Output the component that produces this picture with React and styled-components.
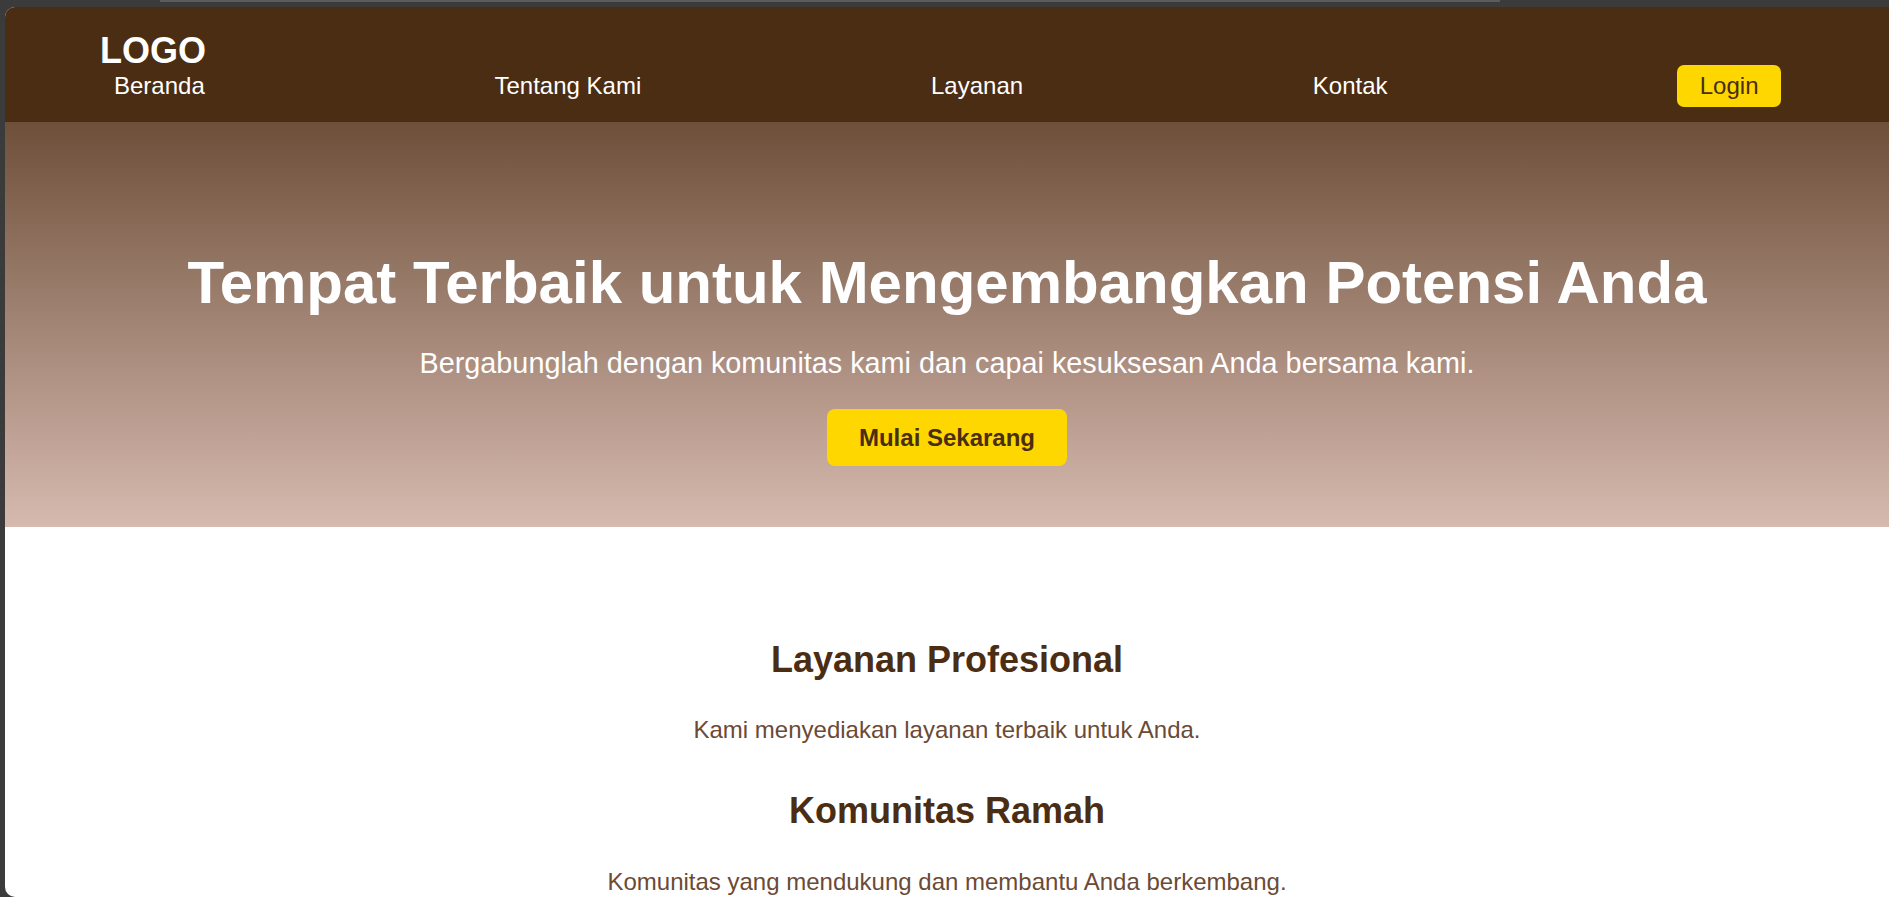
import React from "react";
import styled, { createGlobalStyle } from "styled-components";

const GlobalStyle = createGlobalStyle`
  html, body {
    margin: 0;
    padding: 0;
    background: #3b3b3b;
    overflow: hidden;
  }
  body {
    font-family: "Liberation Sans", Arial, sans-serif;
  }
  * { box-sizing: border-box; }
`;

const Frame = styled.div`
  width: 1889px;
  height: 897px;
  display: flex;
  flex-direction: column;
  background: #3b3b3b;
`;

const TopStrip = styled.div`
  height: 7px;
  flex: none;
  display: flex;
  align-items: flex-start;
`;

const TabHighlight = styled.div`
  margin-left: 160px;
  width: 1340px;
  height: 2px;
  background: #5c5c5c;
`;

const Window = styled.div`
  margin-left: 5px;
  width: 1884px;
  height: 890px;
  background: #ffffff;
  border-radius: 10px 0 0 10px;
  overflow: hidden;
  display: flex;
  flex-direction: column;
`;

const Header = styled.header`
  background: #4a2d12;
  padding: 30px 108px 15px 95px;
  display: flex;
  flex-direction: column;
`;

const Logo = styled.div`
  color: #ffffff;
  font-size: 36px;
  font-weight: 700;
  line-height: 28px;
`;

const Nav = styled.nav`
  height: 42px;
  margin-left: 14px;
  display: flex;
  align-items: center;
  justify-content: space-between;
`;

const NavLink = styled.a`
  color: #ffffff;
  font-size: 24px;
  line-height: 1.15;
  text-decoration: none;
`;

const LoginButton = styled.button`
  height: 42px;
  padding: 0 22.5px;
  border: none;
  border-radius: 7px;
  background: #ffd700;
  color: #4a2d12;
  font-family: inherit;
  font-size: 24px;
  line-height: 1.15;
  cursor: pointer;
`;

const Hero = styled.section`
  background: linear-gradient(to bottom, #6e4f3a, #d6baaf);
  padding: 126px 20px 61px;
  display: flex;
  flex-direction: column;
  align-items: center;
  text-align: center;
`;

const HeroTitle = styled.h1`
  margin: 0 0 30px;
  color: #ffffff;
  font-size: 60px;
  font-weight: 700;
  line-height: 1.15;
`;

const HeroSubtitle = styled.p`
  margin: 0 0 29px;
  color: #ffffff;
  font-size: 28.8px;
  line-height: 1.15;
`;

const CtaButton = styled.button`
  padding: 15px 31.5px;
  border: none;
  border-radius: 8px;
  background: #ffd700;
  color: #4a2d12;
  font-family: inherit;
  font-size: 24px;
  font-weight: 700;
  line-height: 27px;
  cursor: pointer;
`;

const Features = styled.section`
  padding: 111.5px 20px 0;
  display: flex;
  flex-direction: column;
  align-items: center;
  gap: 46.3px;
  text-align: center;
`;

const Feature = styled.div`
  display: flex;
  flex-direction: column;
  align-items: center;
`;

const FeatureTitle = styled.h2`
  margin: 0 0 36.4px;
  color: #4a2d12;
  font-size: 36px;
  font-weight: 700;
  line-height: 1.15;
`;

const FeatureText = styled.p`
  margin: 0;
  color: #6b4a36;
  font-size: 24px;
  line-height: 1.15;
`;

const navItems = ["Beranda", "Tentang Kami", "Layanan", "Kontak"];

const features = [
  { title: "Layanan Profesional", text: "Kami menyediakan layanan terbaik untuk Anda." },
  { title: "Komunitas Ramah", text: "Komunitas yang mendukung dan membantu Anda berkembang." },
];

export default function App() {
  return (
    <>
      <GlobalStyle />
      <Frame>
        <TopStrip>
          <TabHighlight />
        </TopStrip>
        <Window>
          <Header>
            <Logo>LOGO</Logo>
            <Nav>
              {navItems.map((item) => (
                <NavLink key={item} href="#">
                  {item}
                </NavLink>
              ))}
              <LoginButton>Login</LoginButton>
            </Nav>
          </Header>
          <Hero>
            <HeroTitle>Tempat Terbaik untuk Mengembangkan Potensi Anda</HeroTitle>
            <HeroSubtitle>
              Bergabunglah dengan komunitas kami dan capai kesuksesan Anda bersama kami.
            </HeroSubtitle>
            <CtaButton>Mulai Sekarang</CtaButton>
          </Hero>
          <Features>
            {features.map((f) => (
              <Feature key={f.title}>
                <FeatureTitle>{f.title}</FeatureTitle>
                <FeatureText>{f.text}</FeatureText>
              </Feature>
            ))}
          </Features>
        </Window>
      </Frame>
    </>
  );
}
